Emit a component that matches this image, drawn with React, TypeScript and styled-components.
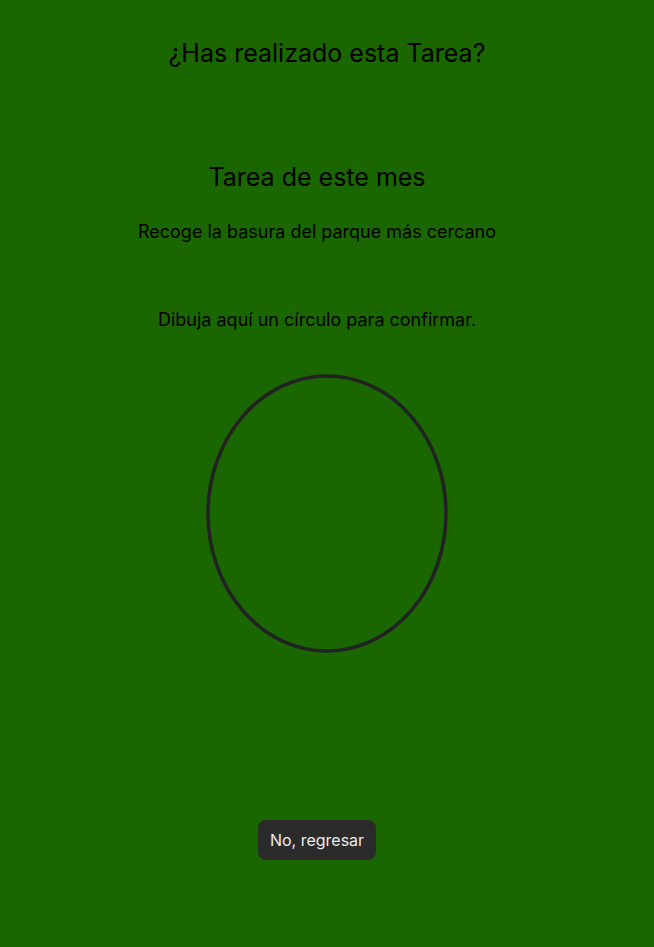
import React from "react";
import styled, { createGlobalStyle } from "styled-components";

const Global = createGlobalStyle`
  html, body { margin: 0; padding: 0; }
  body {
    background: #1a6600;
    font-family: Inter, "Noto Sans", sans-serif;
    color: #000;
  }
`;

const Page = styled.main`
  min-height: 100vh;
  background: #1a6600;
  display: flex;
  flex-direction: column;
  align-items: center;
  padding-top: 38px;
  box-sizing: border-box;
`;

const Title = styled.h1`
  margin: 0;
  font-size: 25px;
  line-height: 30px;
  font-weight: 400;
`;

const OffsetColumn = styled.div<{ $top: number }>`
  display: flex;
  flex-direction: column;
  align-items: center;
  align-self: stretch;
  padding-right: 20px;
  margin-top: ${(p) => p.$top}px;
`;

const TaskHeading = styled.h2`
  margin: 0;
  font-size: 25px;
  line-height: 30px;
  font-weight: 400;
`;

const TaskText = styled.p<{ $gap: number }>`
  margin: ${(p) => p.$gap}px 0 0;
  font-size: 18px;
  line-height: 22px;
`;

const Canvas = styled.svg`
  display: block;
  margin-top: 43px;
`;

const BackButton = styled.button`
  height: 40px;
  padding: 0 12px;
  border: none;
  border-radius: 8px;
  background: #2b2b2b;
  color: #ececec;
  font-family: Inter, "Noto Sans", sans-serif;
  font-size: 16px;
  cursor: pointer;
`;

export default function App() {
  return (
    <>
      <Global />
      <Page>
        <Title>¿Has realizado esta Tarea?</Title>
        <OffsetColumn $top={94}>
          <TaskHeading>Tarea de este mes</TaskHeading>
          <TaskText $gap={29}>Recoge la basura del parque más cercano</TaskText>
          <TaskText $gap={66}>Dibuja aquí un círculo para confirmar.</TaskText>
        </OffsetColumn>
        <Canvas width="242" height="279" viewBox="0 0 242 279">
          <ellipse cx="121" cy="139.5" rx="119" ry="137.5" fill="none" stroke="#222" strokeWidth="3.5" />
        </Canvas>
        <OffsetColumn $top={167}>
          <BackButton>No, regresar</BackButton>
        </OffsetColumn>
      </Page>
    </>
  );
}
